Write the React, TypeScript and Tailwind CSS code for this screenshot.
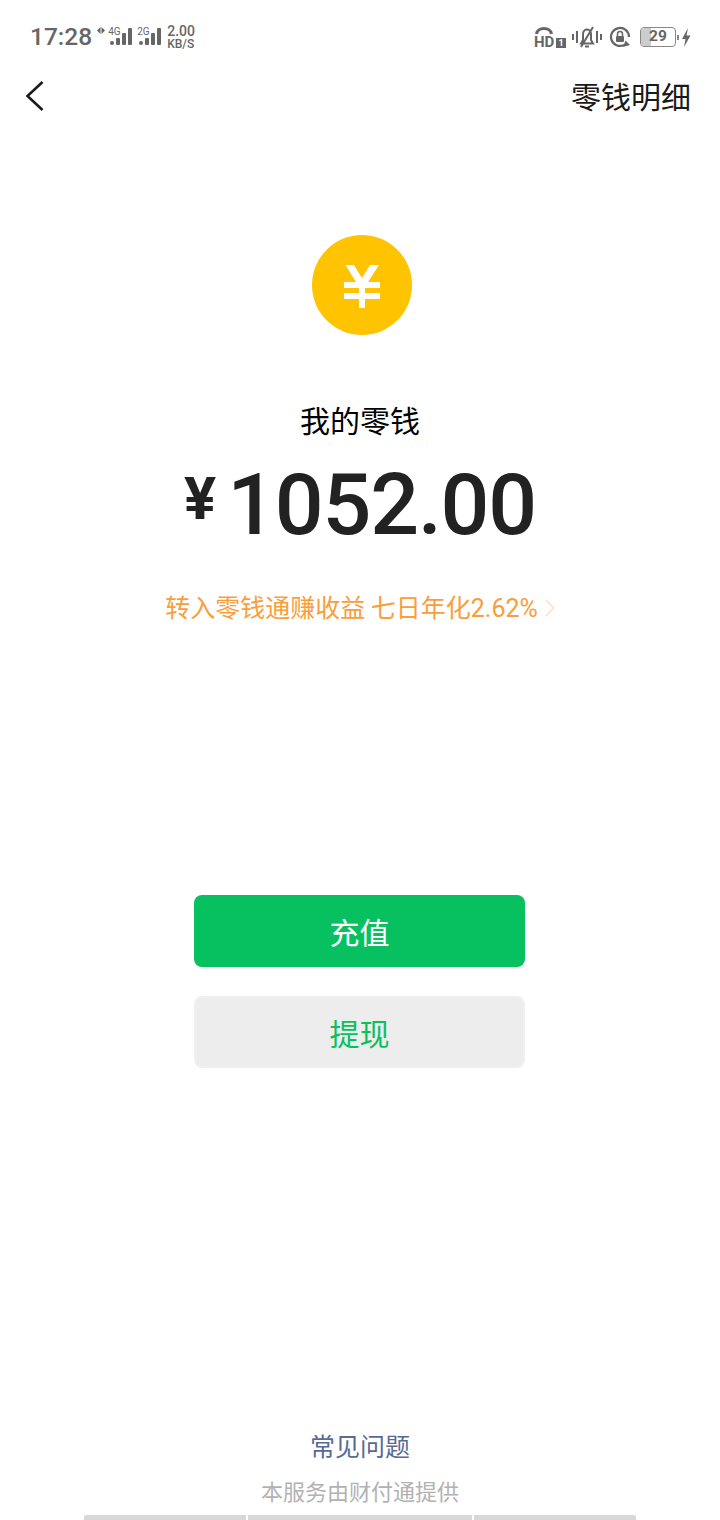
import { ChevronRight } from 'lucide-react';

const cjk = "font-['Noto_Sans_CJK_SC','Noto_Sans',sans-serif]";

function Signal({ label }: { label: string }) {
  return (
    <div className="relative mb-[2px] h-[18px] w-[26px]">
      <span className="absolute left-0 top-[-1px] font-['Roboto',sans-serif] text-[10px] leading-[12px] text-[#666]">{label}</span>
      <svg width="26" height="18" viewBox="0 0 26 18" className="absolute left-0 top-0">
        <rect x="2" y="14" width="4" height="4" rx="2" fill="#666" />
        <rect x="8" y="11" width="4" height="7" rx="1" fill="#666" />
        <rect x="14" y="6" width="4" height="12" rx="1" fill="#666" />
        <rect x="20" y="1" width="4" height="17" rx="1" fill="#666" />
      </svg>
    </div>
  );
}

function StatusBar() {
  return (
    <div className="flex h-[74px] items-center justify-between pl-[30px] pr-[29px] text-[#666]">
      <div className="flex items-center">
        <span className="font-['Roboto',sans-serif] text-[24.5px] font-medium leading-none">17:28</span>
        <svg width="8" height="7" viewBox="0 0 8 7" className="mb-[14px] ml-[5px]">
          <path d="M0 3.5 L3.5 0 V7 Z M4.5 0 L8 3.5 L4.5 7 Z" fill="#666" />
        </svg>
        <div className="ml-[3px]"><Signal label="4G" /></div>
        <div className="ml-[3px]"><Signal label="2G" /></div>
        <div className="ml-[4px] flex flex-col font-['Roboto',sans-serif] font-medium">
          <span className="text-[14px] leading-[14px]">2.00</span>
          <span className="text-[12px] leading-[12px]">KB/S</span>
        </div>
      </div>
      <div className="flex items-center">
        <div className="relative h-[22px] w-[32px]">
          <svg width="20" height="9" viewBox="0 0 20 9" className="absolute left-0 top-0">
            <path d="M2.5 8 C3.5 0.5 16.5 0.5 17.5 8" fill="none" stroke="#666" strokeWidth="3" />
          </svg>
          <span className="absolute bottom-[-1px] left-0 font-['Roboto',sans-serif] text-[15px] font-bold leading-[14px]">HD</span>
          <span className="absolute bottom-0 right-0 flex h-[10px] w-[10px] items-center justify-center bg-[#666] font-['Roboto',sans-serif] text-[9px] font-bold leading-none text-white">1</span>
        </div>
        <svg width="30" height="22" viewBox="0 0 30 22" className="ml-[6px]" fill="none" stroke="#666" strokeWidth="2">
          <path d="M1 8 V14 M5 5 V17 M25 5 V17 M29 8 V14" />
          <path d="M9 17.5 H21 L19 14 V8 C19 2 11 2 11 8 V14 Z M13 20.5 H17 M9 21 L21 1" />
        </svg>
        <svg width="22" height="22" viewBox="0 0 22 22" className="ml-[7px]" fill="none">
          <path d="M20 11 A9 9 0 1 0 15 19" stroke="#666" strokeWidth="2.2" />
          <path d="M21 19 L14 21 L16.5 14.5 Z" fill="#666" />
          <rect x="7" y="10" width="8" height="6" rx="1" fill="#666" />
          <path d="M8.5 10 V8 A2.5 2.5 0 0 1 13.5 8 V10" stroke="#666" strokeWidth="1.5" />
        </svg>
        <div className="relative ml-[9px] flex h-[20px] w-[36px] items-center justify-center overflow-hidden rounded-[4px] border border-[#888]">
          <div className="absolute bottom-0 left-0 top-0 w-[10px] bg-[#ccc]" />
          <span className="relative font-['Roboto',sans-serif] text-[15.5px] font-bold leading-none">29</span>
        </div>
        <div className="ml-[1px] h-[5px] w-[2px] bg-[#888]" />
        <svg width="10" height="19" viewBox="0 0 10 19" className="ml-[2px]">
          <path d="M7 0 L1 11 H4.5 L3 19 L9.5 7.5 H5.5 Z" fill="#666" />
        </svg>
      </div>
    </div>
  );
}

export default function App() {
  return (
    <div className={`flex h-[1520px] w-[720px] flex-col overflow-hidden bg-white ${cjk}`}>
      <StatusBar />

      {/* Header */}
      <div className="flex h-[44px] items-center justify-between pl-[24px] pr-[29px]">
        <svg width="22" height="32" viewBox="0 0 22 32" fill="none" stroke="#1a1a1a" strokeWidth="2.6">
          <path d="M18.5 2 L3.5 16 L18.5 30" />
        </svg>
        <span className="mt-[-2px] text-[30px] leading-none text-[#1a1a1a]">零钱明细</span>
      </div>

      {/* Balance */}
      <div className="mt-[117px] flex flex-col items-center">
        <div className="ml-[4px] flex h-[100px] w-[100px] items-center justify-center rounded-full bg-[#ffc300]">
          <svg width="100" height="100" viewBox="0 0 100 100">
            <path
              d="M33.5 30 H42 L50 43 L58 30 H67 L56 47 H68 V53 H53 V58 H68 V64 H53 V73 H47 V64 H32 V58 H47 V53 H32 V47 H44 Z"
              fill="white"
            />
          </svg>
        </div>
        <div className="mt-[66px] text-[30px] leading-[36px] text-black">我的零钱</div>
        <div className="mt-[16px] flex items-start text-[#222]">
          <span className="mt-[6px] font-['Roboto',sans-serif] text-[60px] font-bold leading-[80px]">¥</span>
          <span className="ml-[11px] font-['Roboto',sans-serif] text-[86px] font-medium leading-[104px] tracking-[-1.2px]">1052.00</span>
        </div>
        <div className="ml-[10px] mt-[31px] flex items-center text-[#fa9d3b]">
          <span className="text-[25px] leading-[36px]">
            转入零钱通赚收益 七日年化<span className="font-['Roboto',sans-serif]">2.62%</span>
          </span>
          <ChevronRight size={30} strokeWidth={1.2} className="ml-[-3px] text-[#fde0c0]" />
        </div>
      </div>

      {/* Actions */}
      <div className="mt-[268px] flex flex-col items-center gap-[29px]">
        <button className="ml-[-1px] h-[72px] w-[331px] rounded-[8px] bg-[#07c160] text-[30px] text-white">充值</button>
        <button className="ml-[-1px] h-[72px] w-[331px] rounded-[8px] border-2 border-[#f0f0f0] bg-[#ededed] text-[30px] text-[#07c160]">提现</button>
      </div>

      {/* Footer */}
      <div className="mt-auto flex flex-col items-center">
        <div className="text-[25px] leading-[36px] text-[#576b95]">常见问题</div>
        <div className="mt-[11px] text-[22px] leading-[32px] text-[#b2b2b2]">本服务由财付通提供</div>
        <div className="mt-[9px] flex h-[5px] w-[552px] gap-[2px]">
          <div className="w-[162px] rounded-tl-[3px] bg-[#d8d8d8]" />
          <div className="w-[224px] bg-[#d8d8d8]" />
          <div className="flex-1 rounded-tr-[3px] bg-[#d8d8d8]" />
        </div>
      </div>
    </div>
  );
}
